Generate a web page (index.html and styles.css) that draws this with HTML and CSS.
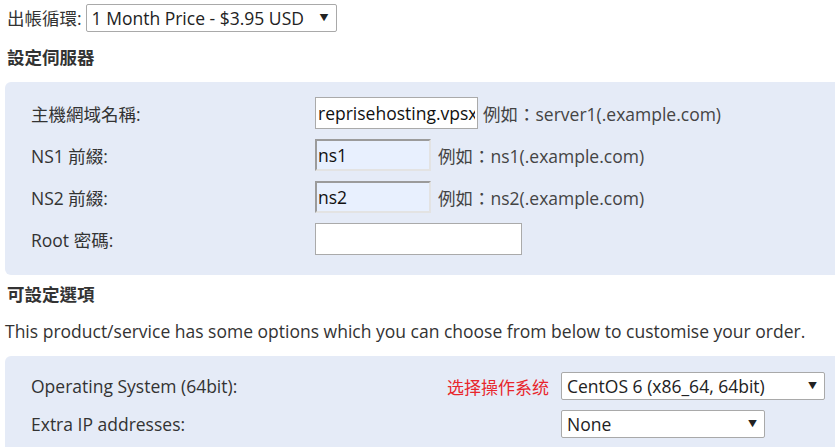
FILE: index.html
```html
<!DOCTYPE html>
<html>
<head>
<meta charset="utf-8">
<link rel="stylesheet" href="styles.css">
</head>
<body>
<div class="page">
  <div class="cycle">
    <label class="cycle-label">出帳循環:</label>
    <span class="select-wrap cycle-select"><select><option>1 Month Price - $3.95 USD</option></select></span>
  </div>

  <h3 class="heading h-server">設定伺服器</h3>

  <div class="panel panel-server">
    <div class="row">
      <div class="label">主機網域名稱:</div>
      <div class="field"><input class="text host" type="text" value="reprisehosting.vpsxyz"><span class="hint hint-tight">例如：server1(.example.com)</span></div>
    </div>
    <div class="row">
      <div class="label">NS1 前綴:</div>
      <div class="field"><input class="text ns" type="text" value="ns1"><span class="hint">例如：ns1(.example.com)</span></div>
    </div>
    <div class="row">
      <div class="label">NS2 前綴:</div>
      <div class="field"><input class="text ns" type="text" value="ns2"><span class="hint">例如：ns2(.example.com)</span></div>
    </div>
    <div class="row">
      <div class="label">Root 密碼:</div>
      <div class="field"><input class="text pw" type="password" value=""></div>
    </div>
  </div>

  <h3 class="heading h-options">可設定選項</h3>
  <p class="intro">This product/service has some options which you can choose from below to customise your order.</p>

  <div class="panel panel-options">
    <div class="orow">
      <div class="olabel">Operating System (64bit):</div>
      <div class="ofield">
        <span class="note">选择操作系统</span>
        <span class="select-wrap os-select"><select><option>CentOS 6 (x86_64, 64bit)</option></select></span>
      </div>
    </div>
    <div class="orow">
      <div class="olabel">Extra IP addresses:</div>
      <div class="ofield">
        <span class="select-wrap ip-select"><select><option>None</option></select></span>
      </div>
    </div>
  </div>
</div>
</body>
</html>
```

FILE: styles.css
```css
html, body {
  margin: 0;
  padding: 0;
  background: #ffffff;
}
body {
  font-family: "Open Sans", "Noto Sans CJK TC", sans-serif;
  font-size: 17.5px;
  color: #333333;
  overflow: hidden;
}
.page {
  padding: 0 0 0 5px;
}
.cycle {
  display: flex;
  align-items: center;
  height: 34px;
  padding-left: 2px;
}
.cycle-label {
  margin-right: 4px;
}
.select-wrap {
  position: relative;
  display: inline-block;
}
.select-wrap select {
  -webkit-appearance: none;
  appearance: none;
  font-family: "Open Sans", "Noto Sans CJK TC", sans-serif;
  font-size: 17.5px;
  color: #222;
  background: #fff;
  border: 1px solid #a9a9a9;
  border-radius: 2px;
  height: 28px;
  padding: 0 20px 0 5px;
  margin: 0;
  width: 100%;
  box-sizing: border-box;
}
.select-wrap::after {
  content: "▼";
  position: absolute;
  right: 8px;
  top: 9px;
  font-size: 9px;
  line-height: 10px;
  color: #222;
  pointer-events: none;
}
.cycle-select {
  width: 251px;
  margin-top: 1px;
}
.heading {
  margin: 11px 0 13px 2px;
  font-size: 17.5px;
  line-height: 24px;
  font-weight: bold;
  color: #333;
}
.panel {
  background: #e5ebf7;
  border-radius: 6px 0 0 6px;
}
.panel-server {
  padding: 15px 0 20px 26px;
  display: flex;
  flex-direction: column;
  gap: 10px;
}
.row {
  display: flex;
  align-items: center;
  height: 32px;
}
.label {
  width: 284px;
}
.field {
  display: flex;
  align-items: center;
}
.text {
  box-sizing: border-box;
  height: 32px;
  margin: 0;
  font-family: "Open Sans", sans-serif;
  font-size: 17.5px;
  color: #111;
  padding: 0 2px;
  outline: none;
}
.host {
  width: 163px;
  background: #fff;
  border: 1px solid #aaaaaa;
}
.ns {
  width: 116px;
  background: #e8f0fe;
  border-style: solid;
  border-width: 2px;
  border-color: #9b9b9b #e3e3e3 #e3e3e3 #9b9b9b;
  padding: 0 1px;
}
.pw {
  width: 207px;
  background: #fff;
  border: 1px solid #aaaaaa;
}
.hint {
  margin-left: 7px;
  color: #444;
}
.hint-tight {
  margin-left: 5px;
}
.h-options {
  margin: 7px 0 0 2px;
}
.intro {
  margin: 13px 0 13px 0;
  line-height: 24px;
}
.panel-options {
  padding: 16px 0 20px 26px;
  display: flex;
  flex-direction: column;
  gap: 10px;
}
.orow {
  display: flex;
  align-items: center;
  height: 28px;
}
.olabel {
  width: 530px;
}
.ofield {
  display: flex;
  align-items: center;
  width: 264px;
  position: relative;
}
.note {
  position: absolute;
  right: 276px;
  white-space: nowrap;
  font-size: 17px;
  color: #e8262c;
}
.os-select {
  width: 264px;
}
.ip-select {
  width: 204px;
}
```
